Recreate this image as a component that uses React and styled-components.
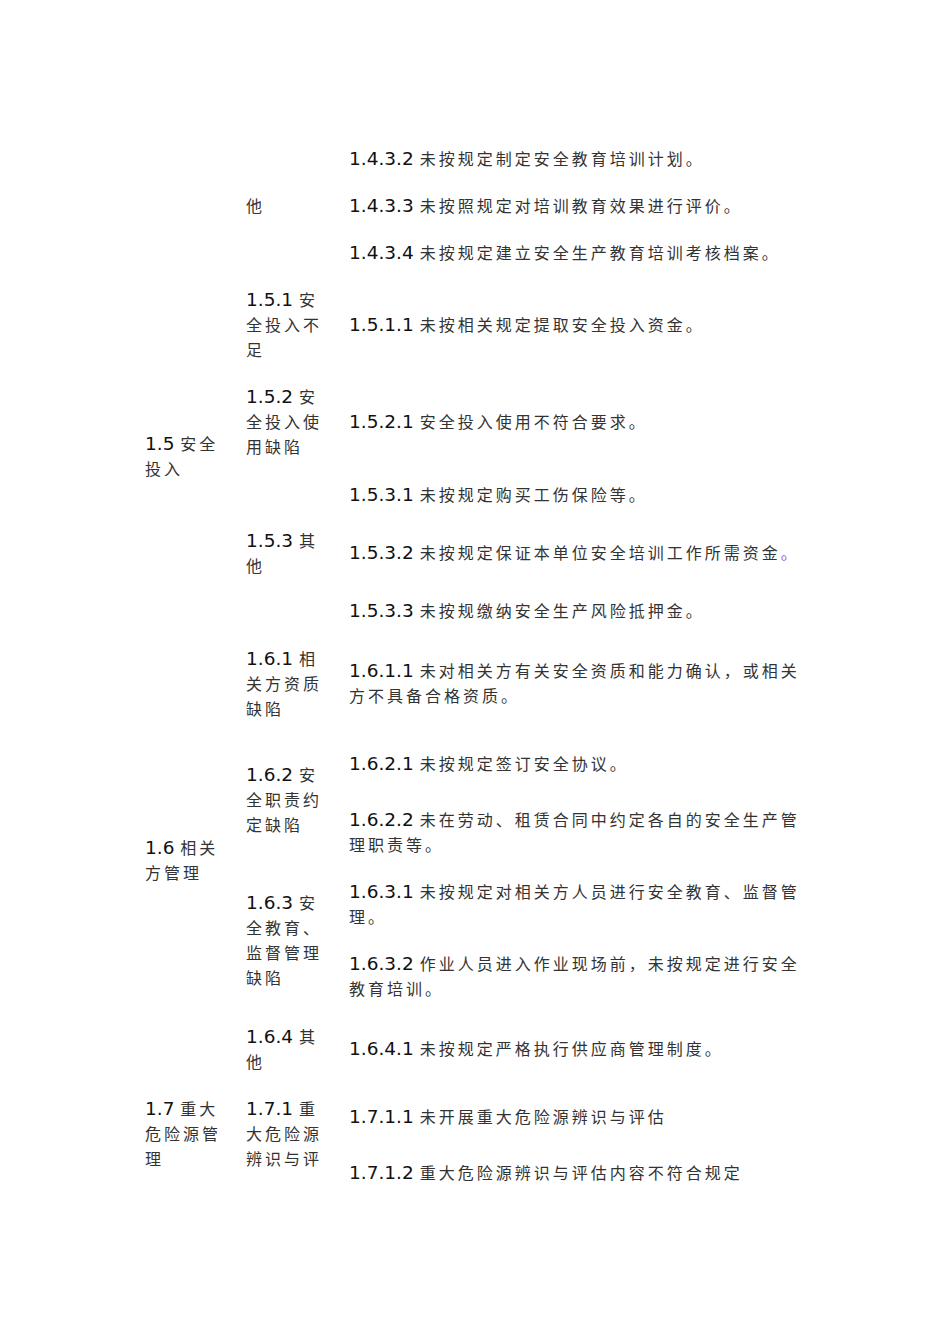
import React from 'react';
import styled, {createGlobalStyle} from 'styled-components';

const Global = createGlobalStyle`
    html, body {
        margin: 0;
        background: #fff;
    }
`;

const Page = styled.div`
    width: 950px;
    min-height: 1344px;
    box-sizing: border-box;
    padding: 135px 0 0 145px;
    background: #fff;
`;

const Table = styled.table`
    border-collapse: collapse;
    border-spacing: 0;
`;

const Cell = styled.td`
    box-sizing: content-box;
    width: ${props => props.w}px;
    min-width: ${props => props.w}px;
    max-width: ${props => props.w}px;
    padding: ${props => props.top ? '11px' : '0'} ${props => props.gap || 0}px 0 0;
    vertical-align: ${props => props.top ? 'top' : 'middle'};
    font-family: "Noto Sans CJK SC", "DejaVu Sans", sans-serif;
    font-size: 16px;
    line-height: 25px;
    letter-spacing: 3px;
    color: #333;
    word-break: break-all;
`;

const Num = styled.span`
    font-family: "DejaVu Sans", sans-serif;
    font-size: 18.5px;
    line-height: 18px;
    letter-spacing: 0;
    color: #111;
`;

const Mark = styled.span`
    color: #a348d6;
`;

const rows = [
    {h: 47, n: '1.4.3.2', t: '未按规定制定安全教育培训计划。'},
    {h: 47, n: '1.4.3.3', t: '未按照规定对培训教育效果进行评价。'},
    {h: 47, n: '1.4.3.4', t: '未按规定建立安全生产教育培训考核档案。'},
    {h: 97, n: '1.5.1.1', t: '未按相关规定提取安全投入资金。'},
    {h: 97, n: '1.5.2.1', t: '安全投入使用不符合要求。'},
    {h: 49, n: '1.5.3.1', t: '未按规定购买工伤保险等。'},
    {h: 67, n: '1.5.3.2', t: '未按规定保证本单位安全培训工作所需资金', mark: '。'},
    {h: 49, n: '1.5.3.3', t: '未按规缴纳安全生产风险抵押金。'},
    {h: 96, n: '1.6.1.1', t: '未对相关方有关安全资质和能力确认，或相关方不具备合格资质。'},
    {h: 65, n: '1.6.2.1', t: '未按规定签订安全协议。'},
    {h: 72, n: '1.6.2.2', t: '未在劳动、租赁合同中约定各自的安全生产管理职责等。'},
    {h: 72, n: '1.6.3.1', t: '未按规定对相关方人员进行安全教育、监督管理。'},
    {h: 72, n: '1.6.3.2', t: '作业人员进入作业现场前，未按规定进行安全教育培训。'},
    {h: 73, n: '1.6.4.1', t: '未按规定严格执行供应商管理制度。'},
    {h: 63, n: '1.7.1.1', t: '未开展重大危险源辨识与评估'},
    {h: 49, n: '1.7.1.2', t: '重大危险源辨识与评估内容不符合规定'},
];

// spans keyed by the first row index they start on
const groups = {
    0: {span: 3, n: '', t: ''},
    3: {span: 5, n: '1.5', t: '安全投入'},
    8: {span: 6, n: '1.6', t: '相关方管理'},
    14: {span: 2, n: '1.7', t: '重大危险源管理', top: true},
};

const items = {
    0: {span: 3, n: '', t: '他'},
    3: {span: 1, n: '1.5.1', t: '安全投入不足'},
    4: {span: 1, n: '1.5.2', t: '安全投入使用缺陷'},
    5: {span: 3, n: '1.5.3', t: '其他'},
    8: {span: 1, n: '1.6.1', t: '相关方资质缺陷'},
    9: {span: 2, n: '1.6.2', t: '安全职责约定缺陷'},
    11: {span: 2, n: '1.6.3', t: '安全教育、监督管理缺陷'},
    13: {span: 1, n: '1.6.4', t: '其他'},
    14: {span: 2, n: '1.7.1', t: '重大危险源辨识与评', top: true},
};

function Label({n, t, mark}){
    return (
        <>
            {n && <Num>{n} </Num>}
            {t}
            {mark && <Mark>{mark}</Mark>}
        </>
    );
}

function App(){
    return (
        <Page>
            <Global/>
            <Table>
                <tbody>
                    {rows.map((row, i)=>{
                        const g = groups[i];
                        const it = items[i];
                        return (
                            <tr key={row.n} style={{height: row.h}}>
                                {g && (
                                    <Cell rowSpan={g.span} top={g.top} w={80} gap={21}>
                                        <Label n={g.n} t={g.t}/>
                                    </Cell>
                                )}
                                {it && (
                                    <Cell rowSpan={it.span} top={it.top} w={80} gap={23}>
                                        <Label n={it.n} t={it.t}/>
                                    </Cell>
                                )}
                                <Cell w={460}>
                                    <Label n={row.n} t={row.t} mark={row.mark}/>
                                </Cell>
                            </tr>
                        );
                    })}
                </tbody>
            </Table>
        </Page>
    );
}

export default App;
